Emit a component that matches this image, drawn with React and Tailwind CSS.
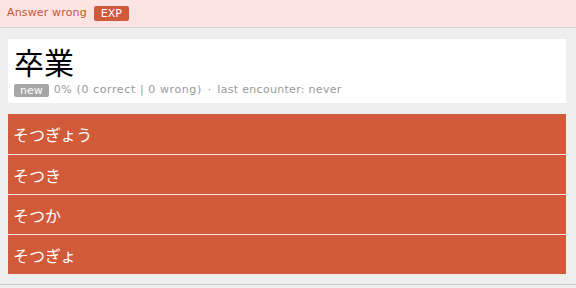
const ANSWERS = ['そつぎょう', 'そつき', 'そつか', 'そつぎょ'];

export default function App() {
    return (
        <div className="w-[576px] h-[288px] bg-[#eeeeee] font-['DejaVu_Sans','Noto_Sans_CJK_JP',sans-serif] overflow-hidden">
            {/* Status bar */}
            <div className="h-[28px] bg-[#fde3e1] border-b border-[#d8cfcd] flex items-center pl-[7px] gap-[7px]">
                <span className="text-[11px] text-[#c4553c] tracking-[0.15px]">Answer wrong</span>
                <span className="bg-[#d05a3a] text-white text-[11px] leading-[15px] px-[7px] rounded-[2px]">EXP</span>
            </div>

            <div className="pl-[8px] pr-[10px] pt-[11px]">
                {/* Card */}
                <div className="bg-white h-[64px] pl-[6px] pt-[3px]">
                    <div className="text-[30px] leading-[38px] text-black font-['Noto_Sans_CJK_JP',sans-serif]">卒業</div>
                    <div className="flex items-center gap-[5px] text-[11px] text-[#999999] mt-[2px]">
                        <span className="bg-[#a6a6a6] text-white px-[6px] leading-[13px] rounded-[2px]">new</span>
                        <span className="tracking-[0.6px]">0% (0 correct | 0 wrong)</span>
                        <span className="px-[1px]">·</span>
                        <span className="tracking-[0.3px]">last encounter: never</span>
                    </div>
                </div>

                {/* Answers */}
                <div className="mt-[11px] flex flex-col">
                    {ANSWERS.map((a, i) => (
                        <div
                            key={a}
                            className={`h-[40px] bg-[#d05a3a] text-white text-[16px] flex items-center pl-[5px] font-['Noto_Sans_CJK_JP',sans-serif] ${i > 0 ? 'border-t border-[#f4e4de]' : ''}`}
                        >
                            {a}
                        </div>
                    ))}
                </div>
            </div>
            <div className="mt-[10px] border-t border-[#c8c8c8]" />
        </div>
    );
}
